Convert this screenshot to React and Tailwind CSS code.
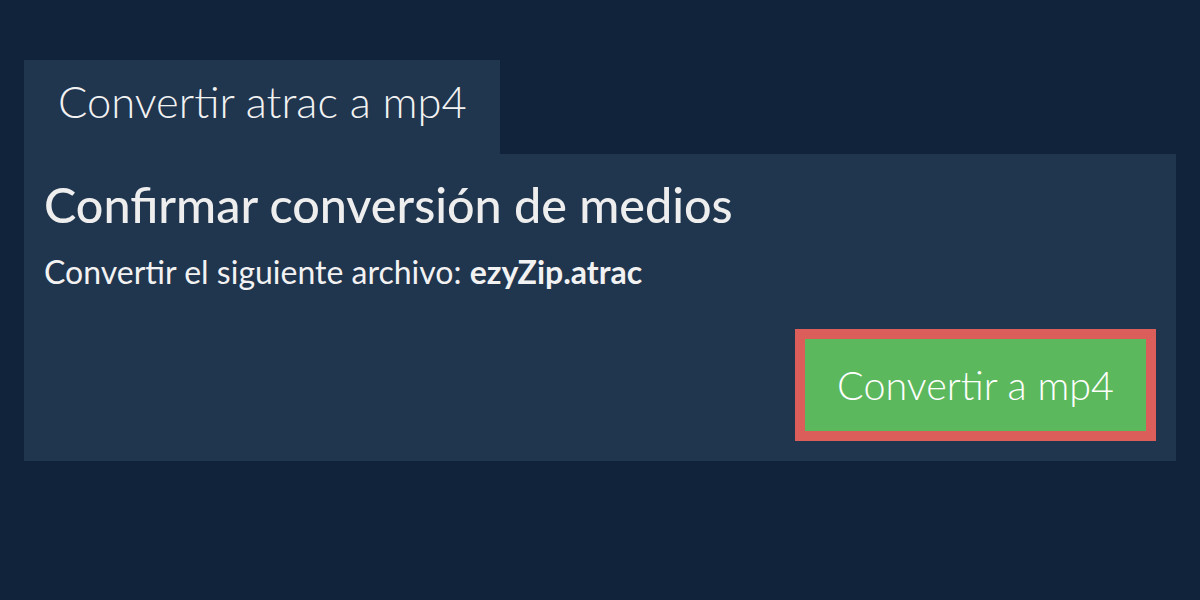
export default function App() {
  return (
    <div
      className="w-[1200px] h-[600px] bg-[#10233a] px-6 pt-[60px]"
      style={{ fontFamily: "Lato, 'Noto Sans', sans-serif" }}
    >
      <div className="w-[476px] h-[94px] bg-[#20354e] flex items-center pl-[34px] pb-[10px]">
        <span className="text-[43.5px] font-light text-[#f2f2f2] leading-none">
          Convertir atrac a mp4
        </span>
      </div>
      <div className="bg-[#20354e] h-[307px] px-5 pt-[21px] pb-[20px] flex flex-col">
        <h1 className="text-[48.5px] font-medium text-[#eeeeee] leading-[1.2]">
          Confirmar conversión de medios
        </h1>
        <p className="mt-[19px] text-[32px] text-[#f2f2f2] leading-tight">
          Convertir el siguiente archivo: <b className="font-bold">ezyZip.atrac</b>
        </p>
        <div className="flex justify-end mt-auto">
          <button className="w-[361px] h-[112px] border-[10px] border-[#db5e5a] bg-[#5cb85c] text-white text-[39.5px] font-light">
            Convertir a mp4
          </button>
        </div>
      </div>
    </div>
  );
}
